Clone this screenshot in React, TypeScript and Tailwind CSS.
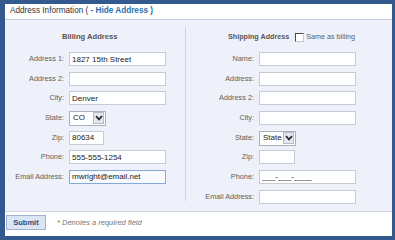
import React from 'react';

const font = "font-['Liberation_Sans',Arial,sans-serif]";

function Label({ children }: { children: React.ReactNode }) {
  return <div className="text-right text-[7.3px] leading-[14px] text-[#606060] whitespace-nowrap">{children}</div>;
}

function TextBox({ value = '', size = 'w-[97px]', focused = false }: { value?: string; size?: string; focused?: boolean }) {
  return (
    <input
      readOnly
      value={value}
      className={`${size} h-[14px] px-[2px] text-[8px] text-[#222] outline-none border ${
        focused ? 'border-[#86a9d6] bg-[#f7faff]' : 'border-[#c6ccd6] bg-white'
      }`}
    />
  );
}

function Select({ value }: { value: string }) {
  return (
    <div className="w-[37px] h-[15px] -mb-px flex items-center justify-between border border-[#aab1bc] bg-white pl-[3px] pr-px">
      <span className="text-[8px] text-[#222]">{value}</span>
      <span className="w-[11px] h-[12px] flex items-center justify-center border border-[#b3bccb] bg-[#e3e8f0]">
        <svg width="8" height="6" viewBox="0 0 8 6">
          <path d="M1 1.2 L4 4.4 L7 1.2" fill="none" stroke="#2b2b2b" strokeWidth="1.7" />
        </svg>
      </span>
    </div>
  );
}

export default function App() {
  return (
    <div className={`w-[395px] h-[240px] bg-[#33598f] pt-[4px] pl-[5px] pr-[3px] pb-[4px] ${font}`}>
      <div className="h-full flex flex-col bg-white">
        <div className="h-[16px] border-b border-[#c6d0e0] pl-[5px] flex items-center text-[8.2px] text-[#333] whitespace-pre">
          Address Information ( <span className="text-[#2a6db0] font-bold">- Hide Address )</span>
        </div>

        <div className="flex-1 flex bg-[#eef1f9]">
          {/* billing */}
          <div className="w-[181px] mt-[7px] mb-[10px] pt-[4px] border-r border-[#cdd4df] flex flex-col">
            <div className="h-[12px] leading-[12px] pl-[57px] text-[7.6px] font-bold text-[#555]">Billing Address</div>
            <div className="mt-[9px] grid grid-cols-[59px_auto] gap-x-[5px] gap-y-[5.67px] items-center justify-start">
              <Label>Address 1:</Label>
              <TextBox value="1827 15th Street" />
              <Label>Address 2:</Label>
              <TextBox />
              <Label>City:</Label>
              <TextBox value="Denver" />
              <Label>State:</Label>
              <Select value="CO" />
              <Label>Zip:</Label>
              <TextBox value="80634" size="w-[35px]" />
              <Label>Phone:</Label>
              <TextBox value="555-555-1254" />
              <Label>Email Address:</Label>
              <TextBox value="mwright@email.net" focused />
            </div>
          </div>

          {/* shipping */}
          <div className="flex-1 pt-[11px] flex flex-col">
            <div className="h-[12px] pl-[42px] flex items-center text-[7.2px] text-[#555] whitespace-nowrap">
              <span className="font-bold">Shipping Address</span>
              <span className="ml-[6px] w-[9px] h-[9px] bg-white border-t border-l border-[#4a4a4a] border-r border-b border-r-[#c8c8c8] border-b-[#c8c8c8]" />
              <span className="ml-[2px] text-[#606060]">Same as billing</span>
            </div>
            <div className="mt-[9px] grid grid-cols-[68px_auto] gap-x-[5px] gap-y-[5.67px] items-center justify-start">
              <Label>Name:</Label>
              <TextBox />
              <Label>Address:</Label>
              <TextBox />
              <Label>Address 2:</Label>
              <TextBox />
              <Label>City:</Label>
              <TextBox />
              <Label>State:</Label>
              <Select value="State" />
              <Label>Zip:</Label>
              <TextBox size="w-[36px]" />
              <Label>Phone:</Label>
              <TextBox value="___-___-____" />
              <Label>Email Address:</Label>
              <TextBox />
            </div>
          </div>
        </div>

        <div className="h-[25px] border-t border-[#d2d8e2] flex items-start pt-[3px] pl-[1px]">
          <button className="w-[40px] h-[15px] border border-[#9fb2d1] bg-[#dce5f3] text-[7.5px] font-bold text-[#2d4a7c]">
            Submit
          </button>
          <span className="ml-[11px] mt-[2px] italic text-[7.5px] text-[#777]">* Denotes a required field</span>
        </div>
      </div>
    </div>
  );
}
